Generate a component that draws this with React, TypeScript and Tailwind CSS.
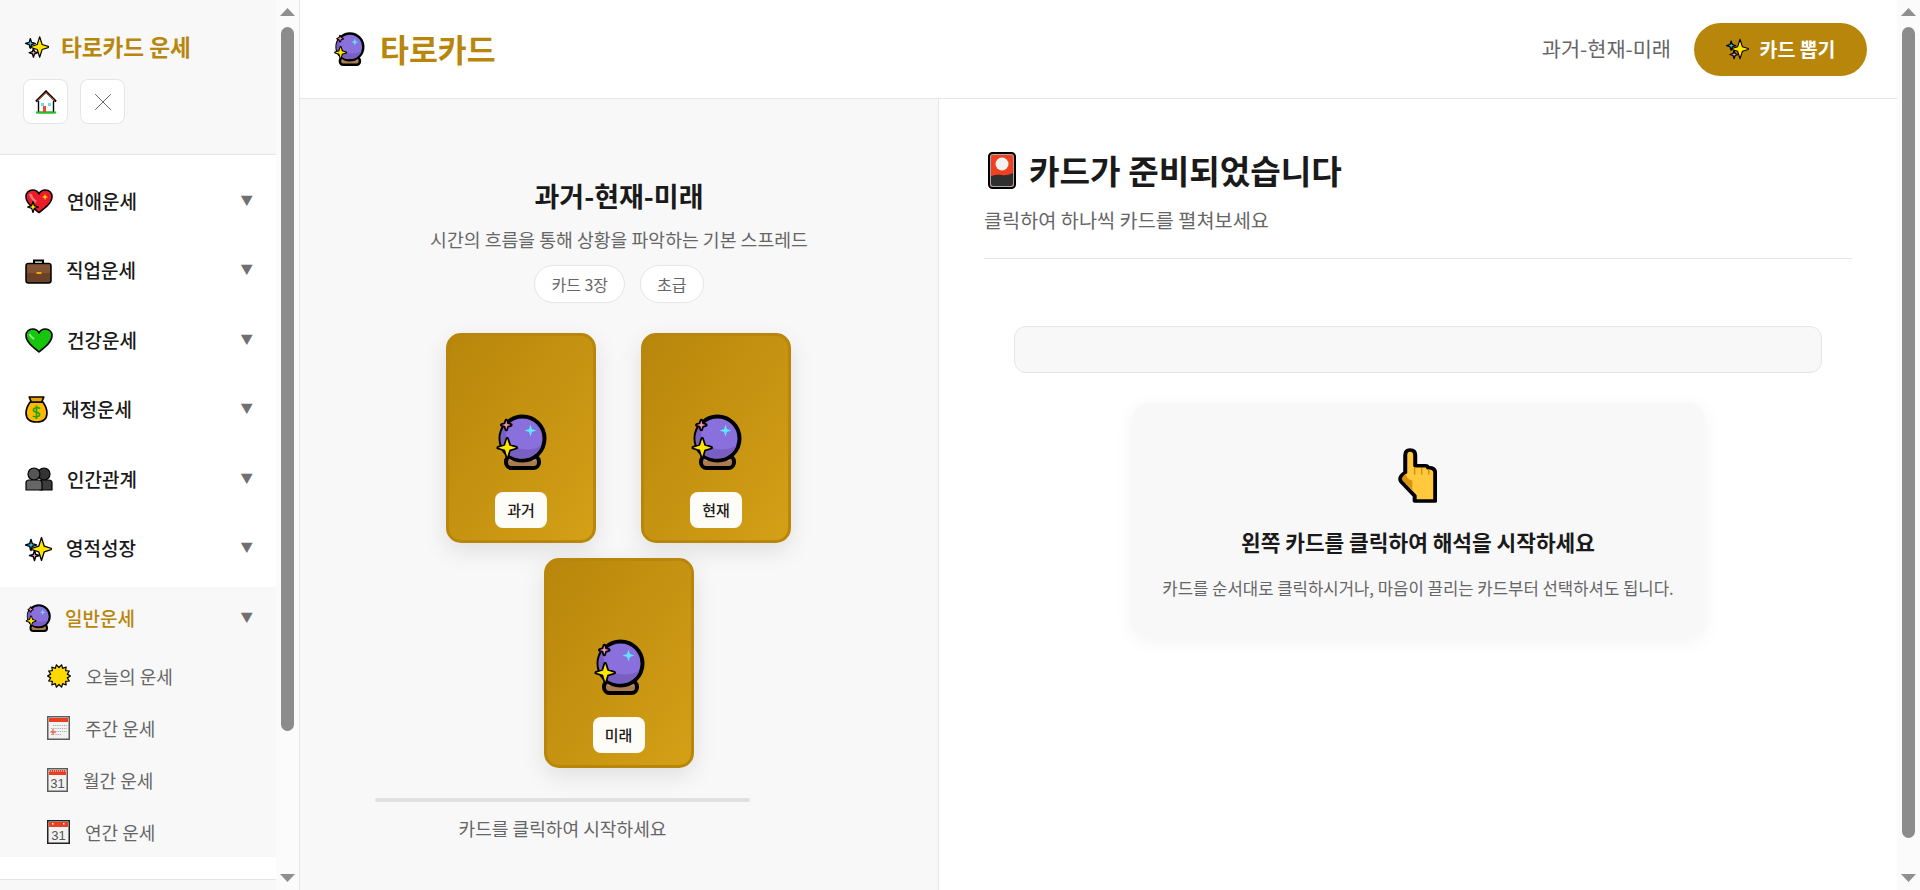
import { X } from "lucide-react";

// four point star with slightly fat body, closer to the emoji sparkle
const star = (cx: number, cy: number, r: number) => {
  const k = r * 0.24;
  return `M${cx} ${cy - r}L${cx + k} ${cy - k}L${cx + r} ${cy}L${cx + k} ${cy + k}L${cx} ${cy + r}L${cx - k} ${cy + k}L${cx - r} ${cy}L${cx - k} ${cy - k}Z`;
};

type EmojiProps = { w: number; h: number };

function Sparkles({ w, h }: EmojiProps) {
  return (
    <svg width={w} height={h} viewBox="0 0 27 26" className="shrink-0">
      <path d={star(6, 9, 5.5)} fill="#35c1f1" stroke="#000" strokeWidth="1.4" strokeLinejoin="round" />
      <path d={star(9.5, 19.5, 5)} fill="#f48fb1" stroke="#000" strokeWidth="1.4" strokeLinejoin="round" />
      <path d={star(16.5, 13, 11.5)} fill="#ffe600" stroke="#000" strokeWidth="1.3" strokeLinejoin="round" />
    </svg>
  );
}

function CrystalBall({ w, h }: EmojiProps) {
  return (
    <svg width={w} height={h} viewBox="0 0 52 56" className="shrink-0">
      <rect x="11" y="42" width="33" height="12" rx="5.5" fill="#a97c50" stroke="#000" strokeWidth="4" />
      <path d="M15 46Q27 42 40 46" stroke="#c9a27a" strokeWidth="2.5" fill="none" />
      <circle cx="27.5" cy="24.5" r="22" fill="#8a70dc" stroke="#000" strokeWidth="4" />
      <path d="M11 10.5A20.2 20.2 0 0 0 27.5 44.6C36 44.6 44 39 46.5 31.5C38 37 23 37 16 30C11 24 9 16 11 10.5Z" fill="#7a5fc2" />
      <path d={star(35.5, 16.5, 6)} fill="#5fe3ff" />
      <path d={star(12.2, 33.7, 9)} fill="#ffe600" stroke="#000" strokeWidth="3.5" strokeLinejoin="round" paintOrder="stroke" />
      <path d={star(11.3, 11, 4.5)} fill="#f48fb1" stroke="#000" strokeWidth="3.5" strokeLinejoin="round" paintOrder="stroke" />
    </svg>
  );
}

function House() {
  return (
    <svg width="22" height="24" viewBox="0 0 22 24" className="shrink-0">
      <path d="M3.5 11V22.5H18.5V11" fill="#fff" stroke="#000" strokeWidth="1.4" />
      <path d="M1 11.5L11 1.5L21 11.5" fill="none" stroke="#000" strokeWidth="2.2" />
      <path d="M2.5 10.5L11 2.5L19.5 10.5" fill="none" stroke="#e8472a" strokeWidth="1" />
      <rect x="1" y="21.5" width="20" height="2" fill="#1dc51d" />
      <rect x="6" y="13" width="3" height="3" fill="#6fd7f7" />
      <rect x="13" y="13" width="3" height="3" fill="#6fd7f7" />
      <rect x="8" y="16" width="3" height="6" fill="#ea4a2b" />
    </svg>
  );
}

function SparkleHeart() {
  return (
    <svg width="28" height="25" viewBox="0 0 28 25" className="shrink-0">
      <path d="M14 23.5C8 19 1 14 1 7.5C1 3.5 4 1 7.5 1C10.5 1 13 2.5 14 5C15 2.5 17.5 1 20.5 1C24 1 27 3.5 27 7.5C27 14 20 19 14 23.5Z" fill="#ea1c2c" stroke="#000" strokeWidth="1.6" strokeLinejoin="round" />
      <path d="M5 5Q7 10 11 13" stroke="#f47a7a" strokeWidth="2.5" fill="none" />
      <path d={star(20, 8, 3.2)} fill="#ffe600" />
      <path d={star(8, 18, 5.5)} fill="#ffe600" stroke="#000" strokeWidth="1.2" strokeLinejoin="round" />
    </svg>
  );
}

function Briefcase() {
  return (
    <svg width="27" height="26" viewBox="0 0 27 26" className="shrink-0">
      <path d="M9 6V2.5H18V6" fill="none" stroke="#000" strokeWidth="2" />
      <rect x="1" y="5.5" width="25" height="19.5" rx="2.5" fill="#6b4227" stroke="#000" strokeWidth="1.5" />
      <rect x="2" y="6.5" width="23" height="8.5" fill="#835433" />
      <rect x="11.5" y="14" width="5" height="2" fill="#f2a60c" />
    </svg>
  );
}

function GreenHeart() {
  return (
    <svg width="28" height="25" viewBox="0 0 28 25" className="shrink-0">
      <path d="M14 24C8 19 1 14 1 7.5C1 3.5 4 1 7.5 1C10.5 1 13 2.5 14 5C15 2.5 17.5 1 20.5 1C24 1 27 3.5 27 7.5C27 14 20 19 14 24Z" fill="#16c60c" stroke="#000" strokeWidth="1.6" strokeLinejoin="round" />
      <path d="M4.5 6Q5.5 9 9 11" stroke="#8fe28a" strokeWidth="2.2" fill="none" />
    </svg>
  );
}

function MoneyBag() {
  return (
    <svg width="23" height="27" viewBox="0 0 22 27" preserveAspectRatio="none" className="shrink-0">
      <path d="M5 6C2 10 1 13 1 17C1 23 5 26 11 26C17 26 21 23 21 17C21 13 20 10 17 6Z" fill="#ffb900" stroke="#000" strokeWidth="1.6" />
      <path d="M4 1H18L16 6H6Z" fill="#eaa300" stroke="#000" strokeWidth="1.6" strokeLinejoin="round" />
      <path d="M14.5 12.5C13 11 8 11.5 8 14C8 17 14 15.5 14 18.5C14 21 9 21.5 7.5 20M11 9.5V23" fill="none" stroke="#16a80c" strokeWidth="1.5" />
    </svg>
  );
}

function Busts() {
  return (
    <svg width="28" height="24" viewBox="0 0 28 24" className="shrink-0">
      <circle cx="19" cy="7" r="6" fill="#333" stroke="#000" strokeWidth="1.2" />
      <path d="M15 23V16Q15 13 18 13H24Q27 13 27 16V23Z" fill="#3d3d3d" stroke="#000" strokeWidth="1.2" />
      <circle cx="9" cy="7" r="6" fill="#555" stroke="#000" strokeWidth="1.2" />
      <path d="M1 23V16Q1 13 4 13H14Q17 13 17 16V23Z" fill="#666" stroke="#000" strokeWidth="1.2" />
    </svg>
  );
}

function Sun() {
  const pts: string[] = [];
  for (let i = 0; i < 28; i++) {
    const r = i % 2 === 0 ? 11.5 : 8.5;
    const a = (i / 28) * Math.PI * 2;
    pts.push(`${(12 + r * Math.cos(a)).toFixed(2)},${(12 + r * Math.sin(a)).toFixed(2)}`);
  }
  return (
    <svg width="24" height="24" viewBox="0 0 24 24" className="shrink-0">
      <polygon points={pts.join(" ")} fill="#ffd800" stroke="#000" strokeWidth="1.2" strokeLinejoin="round" />
    </svg>
  );
}

function WeekCalendar() {
  return (
    <svg width="23" height="24" viewBox="0 0 23 24" className="shrink-0">
      <rect x="0.75" y="0.75" width="21.5" height="22.5" fill="#f2f2f2" stroke="#5c5c5c" strokeWidth="1.5" />
      <rect x="2" y="2" width="19" height="4" fill="#ea3e23" />
      <path d="M6 9.5H20M4 12.5H20M4 15.5H20M4 18.5H15" stroke="#a8a8a8" strokeWidth="1.2" strokeDasharray="1.2 1" />
      <path d="M6 13V19M3.5 16H9" stroke="#ea6a55" strokeWidth="1.4" />
    </svg>
  );
}

function TearCalendar() {
  return (
    <svg width="21" height="24" viewBox="0 0 21 24" className="shrink-0">
      <rect x="0.75" y="0.75" width="19.5" height="22.5" fill="#f2f2f2" stroke="#5c5c5c" strokeWidth="1.5" />
      <rect x="2" y="2" width="17" height="5" fill="#ea3e23" />
      <path d="M2 3H19" stroke="#fff" strokeWidth="1" strokeDasharray="1 1" />
      <text x="10.5" y="20" textAnchor="middle" fontSize="13" fill="#555" fontFamily="Liberation Sans, sans-serif">31</text>
    </svg>
  );
}

function YearCalendar() {
  return (
    <svg width="23" height="24" viewBox="0 0 23 24" className="shrink-0">
      <rect x="0.75" y="0.75" width="21.5" height="22.5" fill="#f2f2f2" stroke="#222" strokeWidth="1.5" />
      <rect x="2" y="2" width="19" height="5" fill="#ea3e23" />
      <rect x="5" y="3" width="1.5" height="1.5" fill="#fff" />
      <rect x="16" y="3" width="1.5" height="1.5" fill="#fff" />
      <text x="11.5" y="20" textAnchor="middle" fontSize="13" fill="#555" fontFamily="Liberation Sans, sans-serif">31</text>
    </svg>
  );
}

function FlowerCard() {
  return (
    <svg width="28" height="37" viewBox="0 0 28 37" className="shrink-0">
      <rect x="1" y="1" width="26" height="35" rx="3.5" fill="#f0401f" stroke="#000" strokeWidth="2" />
      <circle cx="14" cy="12" r="6.5" fill="#f2f2f2" />
      <path d="M3 24Q10 22 14 23Q19 24 25 21V31Q25 34 23 34H5Q3 34 3 31Z" fill="#2f2f2f" />
      <rect x="2.5" y="2.5" width="23" height="32" rx="2.5" fill="none" stroke="#a8a8a8" strokeWidth="1" />
    </svg>
  );
}

function PointingHand() {
  return (
    <svg width="40" height="55" viewBox="0 0 34 54" preserveAspectRatio="none" className="shrink-0 -translate-x-[1px]">
      <path d="M15 52V47L3.5 33Q1 29 7 24V7Q7 2 11 2Q15.5 2 15.5 7V17.5H24Q26 17.5 26.5 19.5Q32 19 32.5 24V52Z" fill="#ffc83d" stroke="#000" strokeWidth="3.4" strokeLinejoin="round" />
      <path d="M7.5 25Q3 29 5 32L13 41V32Q8 31 7.5 25Z" fill="#d8930c" />
      <path d="M15 19V26M21 20V26M27 21V26" stroke="#d8930c" strokeWidth="1.3" />
    </svg>
  );
}

function FakeScrollbar({ thumbHeight }: { thumbHeight: number }) {
  return (
    <div className="w-[23px] h-full shrink-0 bg-[#fbfbfb] flex flex-col items-center justify-between pt-[8px] pb-[8px]">
      <div className="flex flex-col items-center">
        <svg width="15" height="8" viewBox="0 0 15 8"><path d="M7.5 0L15 8H0Z" fill="#8f8f8f" /></svg>
        <div className="w-[13px] rounded-full bg-[#8c8c8c] mt-[11px]" style={{ height: thumbHeight }} />
      </div>
      <svg width="15" height="8" viewBox="0 0 15 8"><path d="M0 0H15L7.5 8Z" fill="#8f8f8f" /></svg>
    </div>
  );
}

const menu = [
  { label: "연애운세", icon: <SparkleHeart /> },
  { label: "직업운세", icon: <Briefcase /> },
  { label: "건강운세", icon: <GreenHeart /> },
  { label: "재정운세", icon: <MoneyBag /> },
  { label: "인간관계", icon: <Busts /> },
  { label: "영적성장", icon: <Sparkles w={27} h={26} /> },
];

const subMenu = [
  { label: "오늘의 운세", icon: <Sun /> },
  { label: "주간 운세", icon: <WeekCalendar /> },
  { label: "월간 운세", icon: <TearCalendar /> },
  { label: "연간 운세", icon: <YearCalendar /> },
];

function TarotCard({ label }: { label: string }) {
  return (
    <div className="w-[150px] h-[210px] rounded-[15px] border-[3px] border-[#b8860b] bg-gradient-to-br from-[#b8860b] to-[#d4a017] shadow-[0_8px_25px_rgba(0,0,0,0.1)] flex flex-col items-center">
      <div className="mt-[78px]">
        <CrystalBall w={52} h={56} />
      </div>
      <div className="mt-[22px] w-[52px] h-[36px] rounded-[8px] bg-[#fefcf7] flex items-center justify-center text-[15px] font-medium text-[#1a1a1a]">
        {label}
      </div>
    </div>
  );
}

export default function App() {
  return (
    <div className="w-[1920px] h-[890px] flex overflow-hidden bg-white font-['Noto_Sans_CJK_KR',sans-serif]">
      {/* Sidebar */}
      <aside className="w-[300px] h-full flex shrink-0 border-r border-[#e5e5e5]">
        <div className="w-[276px] h-full flex flex-col">
          <div className="h-[155px] shrink-0 bg-[#f8f8f8] border-b border-[#e5e5e5] pt-[30px] pl-[23px]">
            <div className="flex items-center gap-[12px] pl-[2px] h-[32px] translate-y-[1px]">
              <Sparkles w={24} h={24} />
              <span className="text-[22.6px] font-bold text-[#b8860b] leading-[32px]">타로카드 운세</span>
            </div>
            <div className="flex gap-[12px] mt-[17px]">
              <button className="w-[45px] h-[45px] rounded-[8px] bg-white border border-[#e5e5e5] flex items-center justify-center">
                <House />
              </button>
              <button className="w-[45px] h-[45px] rounded-[8px] bg-white border border-[#e5e5e5] flex items-center justify-center">
                <X size={30} strokeWidth={0.8} color="#666" />
              </button>
            </div>
          </div>
          <nav className="h-[724px] shrink-0 pt-[15px] bg-white">
            {menu.map((item) => (
              <div key={item.label} className="h-[62px] mb-[7.5px] pl-[25px] pr-[23px] flex items-center gap-[14px]">
                {item.icon}
                <span className="text-[19px] font-medium text-[#1a1a1a]">{item.label}</span>
                <span className="ml-auto text-[12.5px] text-[#707070] -translate-y-[1px]">▼</span>
              </div>
            ))}
            <div className="h-[270px] bg-[#f8f8f8] overflow-hidden">
              <div className="h-[62px] pl-[25px] pr-[23px] flex items-center gap-[14px]">
                <CrystalBall w={26} h={28} />
                <span className="text-[19px] font-medium text-[#b8860b]">일반운세</span>
                <span className="ml-auto text-[12.5px] text-[#707070] -translate-y-[1px]">▼</span>
              </div>
              <div className="mt-[1px]">
                {subMenu.map((item) => (
                  <div key={item.label} className="h-[52px] pl-[47px] flex items-center gap-[15px]">
                    {item.icon}
                    <span className="text-[18px] text-[#666666]">{item.label}</span>
                  </div>
                ))}
              </div>
            </div>
          </nav>
          <div className="flex-1 bg-[#f8f8f8] border-t border-[#e5e5e5]" />
        </div>
        <FakeScrollbar thumbHeight={704} />
      </aside>

      {/* Main */}
      <main className="flex-1 h-full flex flex-col min-w-0">
        <header className="h-[99px] shrink-0 border-b border-[#e5e5e5] flex items-center pl-[33px] pr-[30px]">
          <CrystalBall w={32} h={34} />
          <h1 className="ml-[15px] text-[31.4px] font-bold text-[#b8860b]">타로카드</h1>
          <span className="ml-auto text-[20.8px] text-[#666666]">과거-현재-미래</span>
          <button className="ml-[23px] w-[173px] h-[53px] rounded-full bg-[#b8860b] flex items-center justify-center gap-[11px] text-[19.4px] font-semibold text-white">
            <Sparkles w={23} h={22} />
            카드 뽑기
          </button>
        </header>

        <div className="flex-1 flex min-h-0">
          {/* Spread panel */}
          <section className="w-[639px] shrink-0 bg-[#f8f8f8] border-r border-[#e5e5e5] pt-[79px] flex flex-col">
            <h2 className="text-center text-[27px] leading-[36px] font-bold text-[#1a1a1a]">과거-현재-미래</h2>
            <p className="mt-[13px] text-center text-[18.3px] leading-[24px] text-[#666666]">시간의 흐름을 통해 상황을 파악하는 기본 스프레드</p>
            <div className="mt-[14px] flex justify-center gap-[15px]">
              <span className="h-[38px] px-[16px] rounded-full bg-white border border-[#e5e5e5] flex items-center text-[16px] text-[#666666]">카드 3장</span>
              <span className="h-[38px] px-[16px] rounded-full bg-white border border-[#e5e5e5] flex items-center text-[16px] text-[#666666]">초급</span>
            </div>
            <div className="mt-[30px] flex flex-wrap justify-center gap-x-[45px] gap-y-[15px] w-[345px] ml-[146px]">
              <TarotCard label="과거" />
              <TarotCard label="현재" />
              <TarotCard label="미래" />
            </div>
            <div className="mt-[30px] ml-[75px] w-[375px] h-[4px] rounded-full bg-[#e0e0e0]" />
            <p className="mt-[14px] ml-[75px] w-[375px] text-center text-[18.1px] leading-[24px] text-[#666666]">카드를 클릭하여 시작하세요</p>
          </section>

          {/* Reading panel */}
          <section className="flex-1 min-w-0 px-[45px] pt-[47px]">
            <div className="border-b border-[#e5e5e5] pb-[24px]">
              <div className="flex items-center gap-[13px] pl-[4px] h-[48px]">
                <FlowerCard />
                <h2 className="text-[33.2px] font-bold text-[#1a1a1a]">카드가 준비되었습니다</h2>
              </div>
              <p className="mt-[12px] text-[19.7px] leading-[28px] text-[#666666]">클릭하여 하나씩 카드를 펼쳐보세요</p>
            </div>
            <div className="mt-[67px] mx-[30px] h-[47px] rounded-[12px] bg-[#f8f8f8] border border-[#e5e5e5]" />
            <div className="mt-[30px] mx-auto w-[573px] h-[234px] rounded-[16px] bg-[#f8f8f8] shadow-[0_4px_20px_rgba(0,0,0,0.05)] pt-[45px] flex flex-col items-center">
              <PointingHand />
              <h3 className="mt-[25px] text-[21.4px] leading-[28px] font-semibold text-[#1a1a1a]">왼쪽 카드를 클릭하여 해석을 시작하세요</h3>
              <p className="mt-[20px] text-[16.7px] leading-[24px] text-[#666666]">카드를 순서대로 클릭하시거나, 마음이 끌리는 카드부터 선택하셔도 됩니다.</p>
            </div>
          </section>
        </div>
      </main>
      <FakeScrollbar thumbHeight={811} />
    </div>
  );
}
